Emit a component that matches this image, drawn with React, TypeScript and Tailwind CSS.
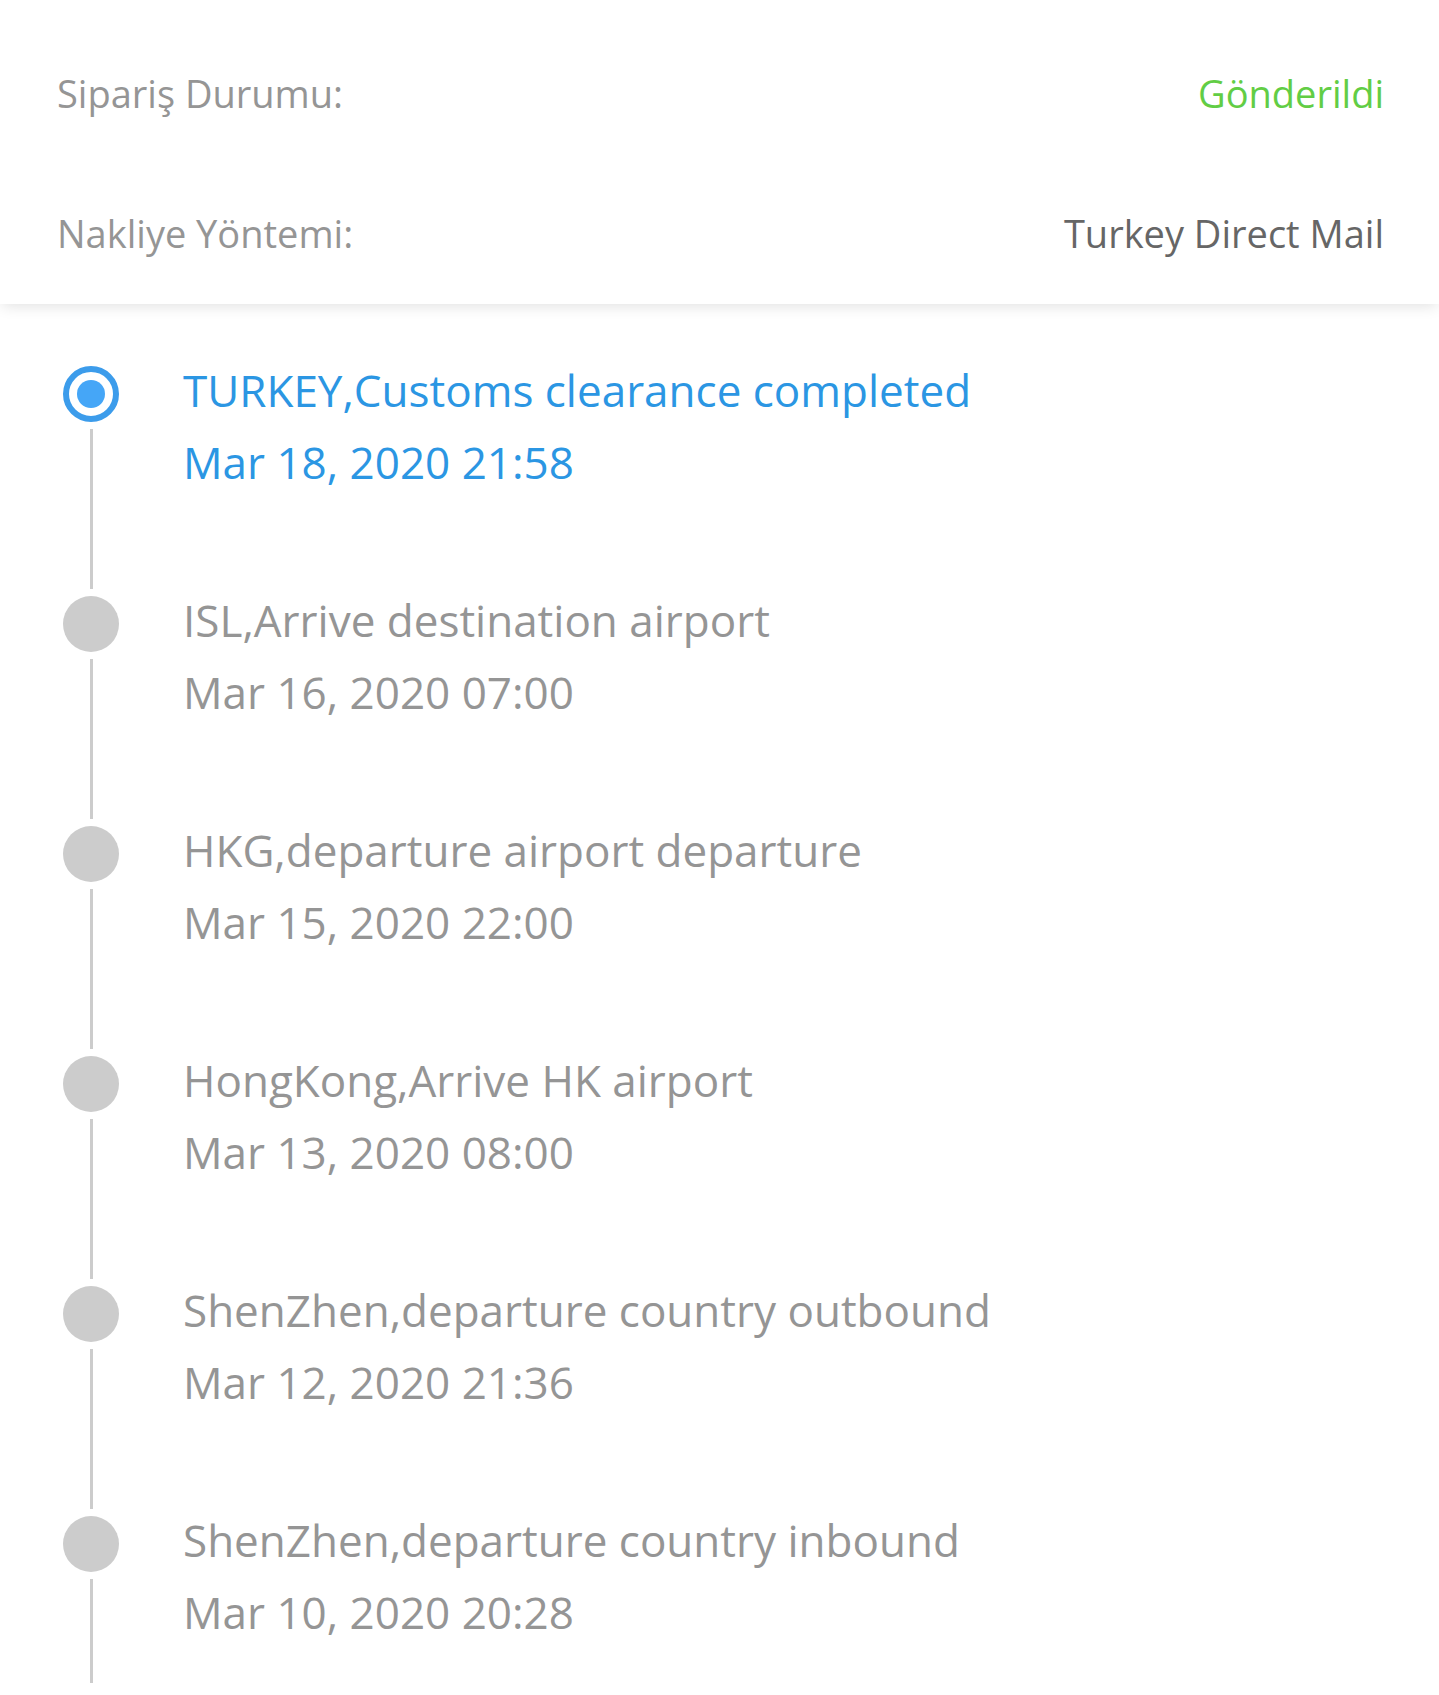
const events = [
  { title: 'TURKEY,Customs clearance completed', date: 'Mar 18, 2020 21:58', active: true },
  { title: 'ISL,Arrive destination airport', date: 'Mar 16, 2020 07:00' },
  { title: 'HKG,departure airport departure', date: 'Mar 15, 2020 22:00' },
  { title: 'HongKong,Arrive HK airport', date: 'Mar 13, 2020 08:00' },
  { title: 'ShenZhen,departure country outbound', date: 'Mar 12, 2020 21:36' },
  { title: 'ShenZhen,departure country inbound', date: 'Mar 10, 2020 20:28' },
];

function Dot({ active }: { active?: boolean }) {
  if (active) {
    return (
      <div className="w-[56px] h-[56px] shrink-0 rounded-full border-[6px] border-[#3c9ceb] flex items-center justify-center">
        <div className="w-[28px] h-[28px] rounded-full bg-[#45a6f7]" />
      </div>
    );
  }
  return <div className="w-[56px] h-[56px] shrink-0 rounded-full bg-[#cccccc]" />;
}

export default function App() {
  return (
    <div className="min-h-[1695px] bg-white font-['Open_Sans',sans-serif]">
      <header className="relative z-10 bg-white pt-[23px] pl-[57px] pr-[55px] h-[304px] shadow-[0_4px_14px_-2px_rgba(0,0,0,0.12)]">
        <div className="flex justify-between items-center h-[140px] text-[38px]">
          <span className="text-[#959595]">Sipariş Durumu:</span>
          <span className="text-[#62cd45]">Gönderildi</span>
        </div>
        <div className="flex justify-between items-center h-[140px] text-[38px]">
          <span className="text-[#959595]">Nakliye Yöntemi:</span>
          <span className="text-[#666666]">Turkey Direct Mail</span>
        </div>
      </header>

      <ul className="pt-[62px] pl-[63px]">
        {events.map((e, i) => (
          <li key={i} className={`flex ${i === events.length - 1 ? 'h-[174px]' : 'h-[230px]'}`}>
            <div className="flex flex-col items-center w-[56px]">
              <Dot active={e.active} />
              <div className="w-[3px] flex-1 my-[7px] bg-[#cccccc]" />
            </div>
            <div
              className={`ml-[64px] -mt-[12px] text-[44px] leading-[72px] ${
                e.active ? 'text-[#2b96e3]' : 'text-[#959595]'
              }`}
            >
              <p>{e.title}</p>
              <p>{e.date}</p>
            </div>
          </li>
        ))}
      </ul>
    </div>
  );
}
